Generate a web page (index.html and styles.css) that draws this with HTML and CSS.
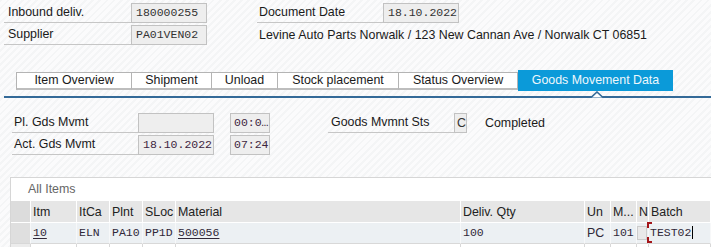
FILE: index.html
```html
<!DOCTYPE html>
<html>
<head>
    <meta charset="utf-8">
    <title>Inbound Delivery - Goods Movement Data</title>
    <link rel="stylesheet" href="styles.css">
</head>
<body>
<div class="page">

    <div class="hrow">
        <span class="label lbl-head">Inbound deliv.</span>
        <span class="field mono">180000255</span>
        <span class="label lbl-doc">Document Date</span>
        <span class="field mono">18.10.2022</span>
    </div>
    <div class="hrow">
        <span class="label lbl-head">Supplier</span>
        <span class="field mono">PA01VEN02</span>
        <span class="desc">Levine Auto Parts Norwalk / 123 New Cannan Ave / Norwalk CT 06851</span>
    </div>

    <div class="tabs">
        <div class="tab tab-item">Item Overview</div>
        <div class="tab tab-ship">Shipment</div>
        <div class="tab tab-unload">Unload</div>
        <div class="tab tab-stock">Stock placement</div>
        <div class="tab tab-status">Status Overview</div>
        <div class="tab tab-gm active">Goods Movement Data</div>
    </div>
    <div class="tabline">
        <svg class="notch" width="12" height="7" viewBox="0 0 12 7">
            <polyline points="0,6.5 6,1 12,6.5" fill="#fff" stroke="#346a98" stroke-width="1.6"/>
        </svg>
    </div>

    <div class="gm">
        <div class="gmrow">
            <span class="label lbl-gm">Pl. Gds Mvmt</span>
            <span class="field mono dark"></span>
            <span class="field mono dark time">00:0…</span>
            <span class="label lbl-sts">Goods Mvmnt Sts</span>
            <span class="field field-code">C</span>
            <span class="desc desc-sts">Completed</span>
        </div>
        <div class="gmrow">
            <span class="label lbl-gm">Act. Gds Mvmt</span>
            <span class="field mono dark">18.10.2022</span>
            <span class="field mono dark time">07:24</span>
        </div>
    </div>

    <div class="items">
        <div class="items-title">All Items</div>
        <div class="grid">
            <div class="cell sel head"></div>
            <div class="cell head">Itm</div>
            <div class="cell head">ItCa</div>
            <div class="cell head">Plnt</div>
            <div class="cell head">SLoc</div>
            <div class="cell head">Material</div>
            <div class="cell head">Deliv. Qty</div>
            <div class="cell head">Un</div>
            <div class="cell head">M...</div>
            <div class="cell head">N</div>
            <div class="cell head">Batch</div>

            <div class="cell sel data"></div>
            <div class="cell data mono"><span class="link">10</span></div>
            <div class="cell data mono">ELN</div>
            <div class="cell data mono">PA10</div>
            <div class="cell data mono">PP1D</div>
            <div class="cell data mono"><span class="link">500056</span></div>
            <div class="cell data mono">100</div>
            <div class="cell data">PC</div>
            <div class="cell data mono">101</div>
            <div class="cell data"><span class="check"></span></div>
            <div class="cell data mono batch"><span class="focus">TEST02</span></div>

            <div class="cell sel empty"></div>
            <div class="cell empty"></div>
            <div class="cell empty"></div>
            <div class="cell empty"></div>
            <div class="cell empty"></div>
            <div class="cell empty"></div>
            <div class="cell empty"></div>
            <div class="cell empty"></div>
            <div class="cell empty"></div>
            <div class="cell empty"></div>
            <div class="cell empty"></div>
        </div>
    </div>

</div>
</body>
</html>
```

FILE: styles.css
```css
body {
    margin: 0;
    font-family: "Liberation Sans", Arial, sans-serif;
    font-size: 12.4px;
    color: #1a1a1a;
    /* the SAP gui light hatch */
    background: repeating-linear-gradient(135deg, #f4f5f6 0px, #f4f5f6 2px, #fbfbfc 2px, #fbfbfc 5px);
    overflow: hidden;
}

.page {
    width: 711px;
    height: 247px;
    padding-top: 2px;
    box-sizing: border-box;
    overflow: hidden;
}

.mono {
    font-family: "Liberation Mono", "Courier New", monospace;
    font-size: 11.5px;
}

/* header rows */
.hrow, .gmrow {
    display: flex;
    height: 22px;
    align-items: flex-start;
}

.label {
    box-sizing: border-box;
    height: 21px;
    line-height: 20px;
    border-bottom: 1px solid #c6c6c6;
    white-space: nowrap;
}

.lbl-head {
    margin-left: 4px;
    width: 127px;
    padding-left: 4px;
}

.lbl-doc {
    margin-left: 50px;
    width: 126px;
    padding-left: 2px;
}

.field {
    box-sizing: border-box;
    margin-top: 1px;
    height: 20px;
    width: 76px;
    line-height: 18px;
    padding-left: 4px;
    background: #eeeeee;
    border: 1px solid #c2c2c2;
    color: #333;
    white-space: nowrap;
    overflow: hidden;
}

.field.dark {
    color: #3d2540;
}

.desc {
    margin-left: 52px;
    line-height: 22px;
    white-space: nowrap;
}

/* tabs */
.tabs {
    display: flex;
    margin-top: 24px;
    margin-left: 16px;
    height: 21px;
    align-items: flex-end;
}

.tab {
    box-sizing: border-box;
    height: 18px;
    line-height: 15px;
    background: #fff;
    border: 1px solid #b4b4b4;
    border-left: none;
    border-bottom: 2px solid #bdbdbd;
    text-align: center;
    white-space: nowrap;
    margin-bottom: 1px;
}

.tab-item { width: 116px; border-left: 1px solid #b4b4b4; }
.tab-ship { width: 80px; }
.tab-unload { width: 66px; }
.tab-stock { width: 121px; }
.tab-status { width: 119px; }

.tab.active {
    width: 155px;
    height: 21px;
    line-height: 20px;
    margin-bottom: 0;
    border: none;
    background: #0b9ad9;
    color: #eef7fc;
}

.tabline {
    position: relative;
    margin-top: 5px;
    margin-left: 4px;
    height: 2px;
    background: #346a98;
}

.notch {
    position: absolute;
    left: 587px;
    top: -5px;
}

/* goods movement block */
.gm {
    margin-top: 14px;
}

.lbl-gm {
    margin-left: 12px;
    width: 126px;
    padding-left: 2px;
}

.time {
    width: 40px;
    margin-left: 16px;
    padding-left: 3px;
}

.lbl-sts {
    margin-left: 58px;
    width: 126px;
    padding-left: 3px;
}

.field-code {
    width: 13px;
    padding-left: 2px;
    color: #333;
}

.desc-sts {
    margin-left: 18px;
}

/* items table */
.items {
    margin-top: 21px;
    margin-left: 10px;
    background: #fff;
    border-top: 1px solid #d6d6d6;
    border-left: 1px solid #d6d6d6;
    height: 70px;
}

.items-title {
    height: 23px;
    line-height: 23px;
    padding-left: 17px;
    color: #666;
}

.grid {
    display: grid;
    grid-template-columns: 20px 46px 33px 33px 33px 285px 124px 26px 26px 12px 1fr;
    grid-template-rows: 22px 21px 4px;
}

.cell {
    box-sizing: border-box;
    border-right: 1px solid #fff;
    border-bottom: 1px solid #fff;
    padding-left: 2px;
    white-space: nowrap;
    overflow: hidden;
}

.cell.head {
    background: #e6e6e6;
    line-height: 22px;
    color: #222;
}

.cell.data {
    background: #ecf0f3;
    line-height: 20px;
    color: #302838;
    border-right-color: #f7f8f9;
    border-bottom: 1px solid #d8d8d8;
}

.cell.sel.head {
    background: #dcdcdc;
}

.cell.sel.data {
    background: #dfdfdf;
}

.cell.empty {
    background: #fff;
    border-bottom: none;
    border-right: 1px solid #d8d8d8;
}

.cell.sel.empty {
    background: #ececec;
}

.link {
    text-decoration: underline;
    text-underline-offset: 2px;
}

.check {
    display: block;
    box-sizing: border-box;
    width: 10px;
    height: 14px;
    margin-top: 3px;
    margin-left: -2px;
    background: #e9e9e9;
    border: 1px solid #cccccc;
}

.batch {
    overflow: visible;
    padding-left: 1px;
}

.focus {
    position: relative;
    border-right: 1px solid #000;
    padding-right: 1px;
}

.focus::before,
.focus::after {
    content: "";
    position: absolute;
    left: -3px;
    width: 3px;
    height: 4px;
    border-left: 2px solid #a4161a;
}

.focus::before {
    top: -4px;
    border-top: 2px solid #a4161a;
}

.focus::after {
    bottom: -4px;
    border-bottom: 2px solid #a4161a;
}
```
